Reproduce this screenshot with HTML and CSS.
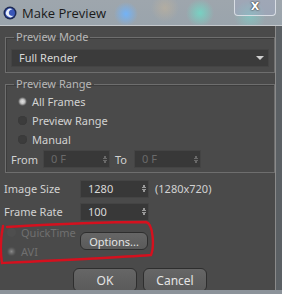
FILE: index.html
```html
<!DOCTYPE html>
<html lang="en">
<head>
    <title>Make Preview</title>
    <link rel="stylesheet" href="styles.css">
</head>
<body>
    <div class="window">
        <div class="titlebar">
            <svg class="app-icon" width="14" height="14" viewBox="0 0 14 14">
                <circle cx="7" cy="7" r="6.5" fill="#1d2a55"/>
                <circle cx="7" cy="7" r="5" fill="#3a57b8"/>
                <path d="M9.5 3.5 A4.2 4.2 0 1 0 10.5 9.5 A3.2 3.2 0 1 1 9.5 3.5 Z" fill="#e8eefa"/>
            </svg>
            <span class="title">Make Preview</span>
            <div class="close">X</div>
        </div>
        <div class="client">
            <fieldset class="group mode">
                <legend>Preview Mode</legend>
                <div class="select">Full Render<span class="arrow"></span></div>
            </fieldset>
            <fieldset class="group range">
                <legend>Preview Range</legend>
                <div class="radio on">All Frames</div>
                <div class="radio">Preview Range</div>
                <div class="radio">Manual</div>
                <div class="from-row">
                    <span class="lbl">From</span>
                    <div class="spin small dim">0 F<span class="updown"></span></div>
                    <span class="lbl to">To</span>
                    <div class="spin small dim">0 F<span class="updown"></span></div>
                </div>
            </fieldset>
            <div class="field-row first">
                <span class="field-lbl">Image Size</span>
                <div class="spin">1280<span class="updown"></span></div>
                <span class="note">(1280x720)</span>
            </div>
            <div class="field-row">
                <span class="field-lbl">Frame Rate</span>
                <div class="spin">100<span class="updown"></span></div>
            </div>
            <div class="format-row">
                <div class="formats">
                    <div class="radio off">QuickTime</div>
                    <div class="radio off dot">AVI</div>
                </div>
                <button class="btn options">Options...</button>
            </div>
            <div class="actions">
                <button class="btn big">OK</button>
                <button class="btn big">Cancel</button>
            </div>
        </div>
        <div class="bottom-frame"></div>
    </div>
    <svg class="scribble" width="282" height="294" viewBox="0 0 282 294">
        <path d="M7 227 C40 225 100 222 146 222 C154 224 154 248 151 255 C110 258 45 261 2 263 C0 250 1 236 3 226"
              fill="none" stroke="#d5101e" stroke-width="2.4" stroke-linecap="round"/>
    </svg>
</body>
</html>
```

FILE: styles.css
```css
body {
    margin: 0px;
    width: 282px;
    height: 294px;
    overflow: hidden;
    background: #3c4450;
    font-family: "Noto Sans", Arial, sans-serif;
    font-size: 11px;
    color: #d2d2d2;
    position: relative;
}
.window {
    display: flex;
    flex-direction: column;
}
.titlebar {
    height: 25px;
    display: flex;
    align-items: flex-start;
    background:
        radial-gradient(circle at 200px 13px, rgba(110, 220, 200, 0.8) 0, rgba(110, 220, 200, 0) 14px),
        radial-gradient(circle at 126px 14px, rgba(110, 180, 255, 0.9) 0, rgba(110, 180, 255, 0) 12px),
        radial-gradient(circle at 250px 16px, rgba(120, 210, 200, 0.6) 0, rgba(120, 210, 200, 0) 16px),
        radial-gradient(circle at 165px 8px, rgba(200, 180, 150, 0.5) 0, rgba(200, 180, 150, 0) 14px),
        linear-gradient(#9ea6ad, #9aa4ac);
    border-bottom: 1px solid #c4c8cc;
}
.app-icon {
    margin: 6px 0 0 3px;
}
.title {
    margin: 4px 0 0 5px;
    font-family: "Open Sans", sans-serif;
    font-size: 13px;
    color: #1a1a1a;
}
.close {
    margin-left: auto;
    margin-right: 6px;
    width: 40px;
    height: 15px;
    border: 1px solid #d8dde4;
    border-top: 0;
    border-radius: 0 0 4px 4px;
    text-align: center;
    font-family: "DejaVu Sans", sans-serif;
    font-weight: bold;
    font-size: 11px;
    line-height: 14px;
    color: #fff;
    text-shadow: 0 0 2px #333, 0 0 1px #222;
    background: rgba(160, 170, 200, 0.35);
}
.client {
    width: 270px;
    height: 264px;
    padding: 0 1px 0 5px;
    background: #4a4a4a;
    border-right: 6px solid #5b6064;
    box-shadow: inset -1px 0 #8a8a8a;
    display: flex;
    flex-direction: column;
}
.bottom-frame {
    height: 4px;
    background: #8c939a;
}
.group {
    margin: 0;
    padding: 0 5px;
    border: 1px solid #6e6e6e;
    box-shadow: inset 1px 1px #3d3d3d;
}
.group legend {
    margin-left: 3px;
    padding: 0 2px;
    color: #b8b8b8;
    line-height: 14px;
}
.mode {
    margin-top: 4px;
    padding-top: 5px;
    padding-bottom: 5px;
}
.select {
    height: 16px;
    padding-left: 7px;
    background: #3b3b3b;
    border: 1px solid #444;
    line-height: 16px;
    color: #d8d8d8;
    display: flex;
    align-items: center;
}
.arrow {
    margin-left: auto;
    margin-right: 4px;
    border-left: 4px solid transparent;
    border-right: 4px solid transparent;
    border-top: 4px solid #cfcfcf;
}
.range {
    margin-top: 4px;
    padding-top: 1px;
    padding-bottom: 5px;
}
.radio {
    height: 19px;
    display: flex;
    align-items: center;
    padding-left: 7px;
    gap: 5px;
}
.radio::before {
    content: "";
    width: 9px;
    height: 9px;
    border-radius: 50%;
    background: #3c3c3c;
    box-shadow: inset 0 0 1px #333;
}
.radio.on::before {
    background: radial-gradient(circle, #e0e0e0 0, #c8c8c8 2px, #6a6a6a 4px);
}
.from-row {
    margin-top: 2px;
    display: flex;
    align-items: center;
    height: 16px;
}
.lbl {
    width: 32px;
}
.lbl.to {
    width: 19px;
    margin-left: 5px;
}
.spin {
    width: 60px;
    height: 16px;
    padding-left: 7px;
    background: #383838;
    border: 1px solid #444;
    line-height: 16px;
    color: #d8d8d8;
    display: flex;
    align-items: center;
}
.spin.small {
    width: 58px;
}
.spin.dim {
    color: #6a6a6a;
}
.updown {
    margin-left: auto;
    margin-right: 2px;
    width: 4px;
    height: 9px;
    background:
        linear-gradient(to bottom right, transparent 50%, #9a9a9a 50%) 0 0 / 2px 4px no-repeat,
        linear-gradient(to bottom left, transparent 50%, #9a9a9a 50%) 2px 0 / 2px 4px no-repeat,
        linear-gradient(to top right, transparent 50%, #9a9a9a 50%) 0 5px / 2px 4px no-repeat,
        linear-gradient(to top left, transparent 50%, #9a9a9a 50%) 2px 5px / 2px 4px no-repeat;
}
.dim .updown {
    opacity: 0.5;
}
.field-row {
    display: flex;
    align-items: center;
    height: 17px;
    margin-top: 6px;
    margin-left: -1px;
}
.field-row.first {
    margin-top: 7px;
}
.field-lbl {
    width: 76px;
}
.note {
    margin-left: 6px;
}
.format-row {
    display: flex;
    align-items: flex-start;
    margin-top: 3px;
}
.formats {
    width: 75px;
}
.radio.off {
    color: #707070;
    padding-left: 2px;
}
.radio.off::before {
    background: #4e4e4e;
    box-shadow: none;
}
.radio.dot::before {
    background: radial-gradient(circle, #8a8a8a 0, #6a6a6a 2px, #505050 4px);
}
.btn {
    font-family: "Noto Sans", Arial, sans-serif;
    font-size: 11px;
    color: #e4e4e4;
    background: linear-gradient(#666, #5a5a5a);
    border: 1px solid #2e2e2e;
    border-radius: 6px;
    padding: 0;
}
.options {
    margin-top: 9px;
    width: 68px;
    height: 18px;
}
.actions {
    margin-top: 7px;
    display: flex;
    gap: 6px;
    padding-left: 68px;
}
.big {
    width: 64px;
    height: 24px;
    font-size: 12px;
}
.scribble {
    position: absolute;
    left: 0;
    top: 0;
}
```
